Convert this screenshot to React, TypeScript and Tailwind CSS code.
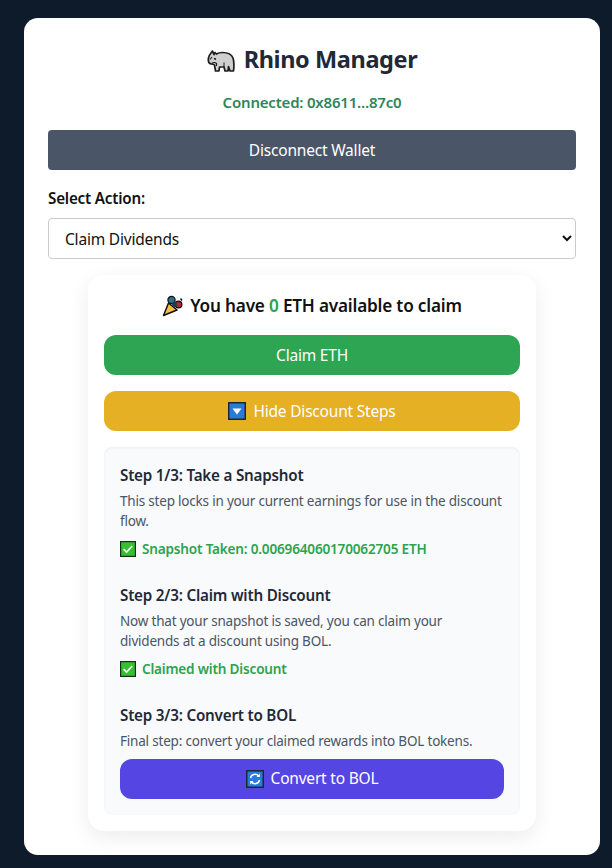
import React from "react";

const Rhino = () => (
  <svg viewBox="0 0 28 23" className="w-[28px] h-[23px]">
    <path
      d="M5.5 2 C4 4 2 6 1.5 9 C1 12 2 14.5 4 15 C5.5 15 6.5 15 7.5 16 L8.5 22 L12 22 L12.5 18 L17 18 L18 22 L21 22 L21.5 17.5 L23 22 L26.5 22 C27 18 27.3 13 26 9 C24.5 5 20 3.5 15.5 3.5 C13 3.5 11 4 9.5 5 L8 3.5 L7 5.5 C6.5 4.5 6 3.5 5.5 2 Z"
      fill="#cfcfcf"
      stroke="#1c1c1c"
      strokeWidth="1.7"
      strokeLinejoin="round"
    />
    <path d="M7 9.5 L9 10.2" stroke="#1c1c1c" strokeWidth="1.5" />
    <path d="M3 10.5 L5 8" stroke="#1c1c1c" strokeWidth="1.2" fill="none" />
    <path d="M4.5 14.5 C6 13.5 8 13 9.5 14.5 L9.5 17" stroke="#1c1c1c" strokeWidth="1.2" fill="none" />
    <path d="M17 18 L17 13.5" stroke="#1c1c1c" strokeWidth="1" fill="none" />
  </svg>
);

const Popper = () => (
  <svg viewBox="0 0 22 22" className="w-[22px] h-[22px]">
    <path d="M1.5 20.5 L6.5 8 L15 15 Z" fill="#f7c043" stroke="#111" strokeWidth="1.5" strokeLinejoin="round" />
    <circle cx="9.5" cy="5" r="3.6" fill="#2d6f8e" stroke="#111" strokeWidth="1.2" />
    <circle cx="16.5" cy="9.5" r="3.4" fill="#b5232a" stroke="#111" strokeWidth="1.2" />
    <circle cx="12.5" cy="9.5" r="2.4" fill="#1b3c4d" />
    <path d="M18.5 3.5 L20 5.5" stroke="#111" strokeWidth="1.4" />
  </svg>
);

const DownBox = () => (
  <svg viewBox="0 0 18 18" className="w-[18px] h-[18px]">
    <rect x="0.75" y="0.75" width="16.5" height="16.5" fill="#2a7bd8" stroke="#1c2733" strokeWidth="1.5" />
    <path d="M4.5 6.5 H13.5 L9 12.5 Z" fill="#fff" />
  </svg>
);

const CheckBox = () => (
  <svg viewBox="0 0 16 16" className="w-[16px] h-[16px] shrink-0">
    <rect x="0.6" y="0.6" width="14.8" height="14.8" fill="#35c030" stroke="#14301a" strokeWidth="1.2" />
    <path d="M3.6 8.2 L6.6 11 L12.2 5" fill="none" stroke="#fff" strokeWidth="1.6" />
  </svg>
);

const RefreshBox = () => (
  <svg viewBox="0 0 18 18" className="w-[18px] h-[18px]">
    <rect x="0.75" y="0.75" width="16.5" height="16.5" fill="#2a7bd8" stroke="#1c2733" strokeWidth="1.5" />
    <path d="M4.5 8 A4.6 4.6 0 0 1 12.6 6" fill="none" stroke="#fff" strokeWidth="1.5" />
    <path d="M13.5 10 A4.6 4.6 0 0 1 5.4 12" fill="none" stroke="#fff" strokeWidth="1.5" />
    <path d="M13.8 3.6 V7 H10.6 Z M4.2 14.4 V11 H7.4 Z" fill="#fff" />
  </svg>
);

function Step({
  title,
  children,
  done,
}: {
  title: string;
  children: React.ReactNode;
  done?: string;
}) {
  return (
    <div>
      <h4 className="text-[15.2px] leading-[20px] font-semibold text-[#1f2937] tracking-[-0.2px]">{title}</h4>
      <p className="mt-[6px] text-[13.5px] leading-[20px] text-[#4b5563] tracking-[-0.2px]">{children}</p>
      {done && (
        <div className="mt-[8px] flex items-center gap-[6px] h-[20px] text-[13.6px] font-semibold text-[#2fa24f] tracking-[-0.2px]">
          <CheckBox />
          {done}
        </div>
      )}
    </div>
  );
}

export default function App() {
  return (
    <div
      className="min-h-[868px] bg-[#0d1b2a] px-[12px] pt-[18px] pb-[13px]"
      style={{ fontFamily: '"Noto Sans", sans-serif' }}
    >
      <div className="ml-[12px] bg-white rounded-[14px] px-[24px] pt-[24px] pb-[24px] h-[837px]">
        <h1 className="flex items-center justify-center gap-[9px] h-[36px] text-[23.5px] font-bold text-[#1f2937] tracking-[-0.4px]">
          <Rhino />
          Rhino Manager
        </h1>
        <p className="mt-[13px] text-center text-[15px] leading-[22px] font-semibold text-[#2f855a] tracking-[-0.2px]">
          Connected: 0x8611...87c0
        </p>
        <button className="mt-[17px] w-full h-[40px] pt-[2px] rounded-[4px] bg-[#4a5568] text-white text-[15.5px] tracking-[-0.2px]">
          Disconnect Wallet
        </button>
        <label className="block mt-[18px] text-[15.2px] leading-[20px] font-semibold text-[#111] tracking-[-0.2px]">
          Select Action:
        </label>
        <select className="block mt-[10px] w-full h-[41px] pl-[12px] pr-[4px] rounded-[4px] border border-[#ccc] bg-white text-[15.5px] text-[#111] tracking-[-0.2px]">
          <option>Claim Dividends</option>
        </select>

        <div className="mt-[16px] mx-[40px] rounded-[16px] bg-white p-[16px] shadow-[0_6px_20px_rgba(0,0,0,0.08)]">
          <h3 className="flex items-center justify-center gap-[6px] h-[30px] text-[17.2px] font-semibold text-[#111] tracking-[-0.2px]">
            <Popper />
            <span>
              You have <span className="text-[#2fa24f]">0</span> ETH available to claim
            </span>
          </h3>
          <button className="mt-[14px] w-full h-[40px] pt-[2px] rounded-[12px] bg-[#2ea553] text-white text-[15.5px] tracking-[-0.2px]">
            Claim ETH
          </button>
          <button className="mt-[16px] w-full h-[40px] rounded-[12px] bg-[#e5b023] text-white text-[15.5px] tracking-[-0.2px] flex items-center justify-center gap-[7px]">
            <DownBox />
            <span className="pt-[2px]">Hide Discount Steps</span>
          </button>
          <div className="mt-[16px] rounded-[8px] bg-[#f8fafc] shadow-[inset_0_1px_3px_rgba(0,0,0,0.05)] px-[16px] pt-[18px] pb-[16px]">
            <Step title="Step 1/3: Take a Snapshot" done="Snapshot Taken: 0.006964060170062705 ETH">
              This step locks in your current earnings for use in the discount flow.
            </Step>
            <div className="mt-[26px]">
              <Step title="Step 2/3: Claim with Discount" done="Claimed with Discount">
                Now that your snapshot is saved, you can claim your dividends at a discount using BOL.
              </Step>
            </div>
            <div className="mt-[26px]">
              <Step title="Step 3/3: Convert to BOL">
                Final step: convert your claimed rewards into BOL tokens.
              </Step>
            </div>
            <button className="mt-[8px] w-full h-[40px] rounded-[12px] bg-[#5546e3] text-white text-[15.5px] tracking-[-0.2px] flex items-center justify-center gap-[7px]">
              <RefreshBox />
              Convert to BOL
            </button>
          </div>
        </div>
      </div>
    </div>
  );
}
